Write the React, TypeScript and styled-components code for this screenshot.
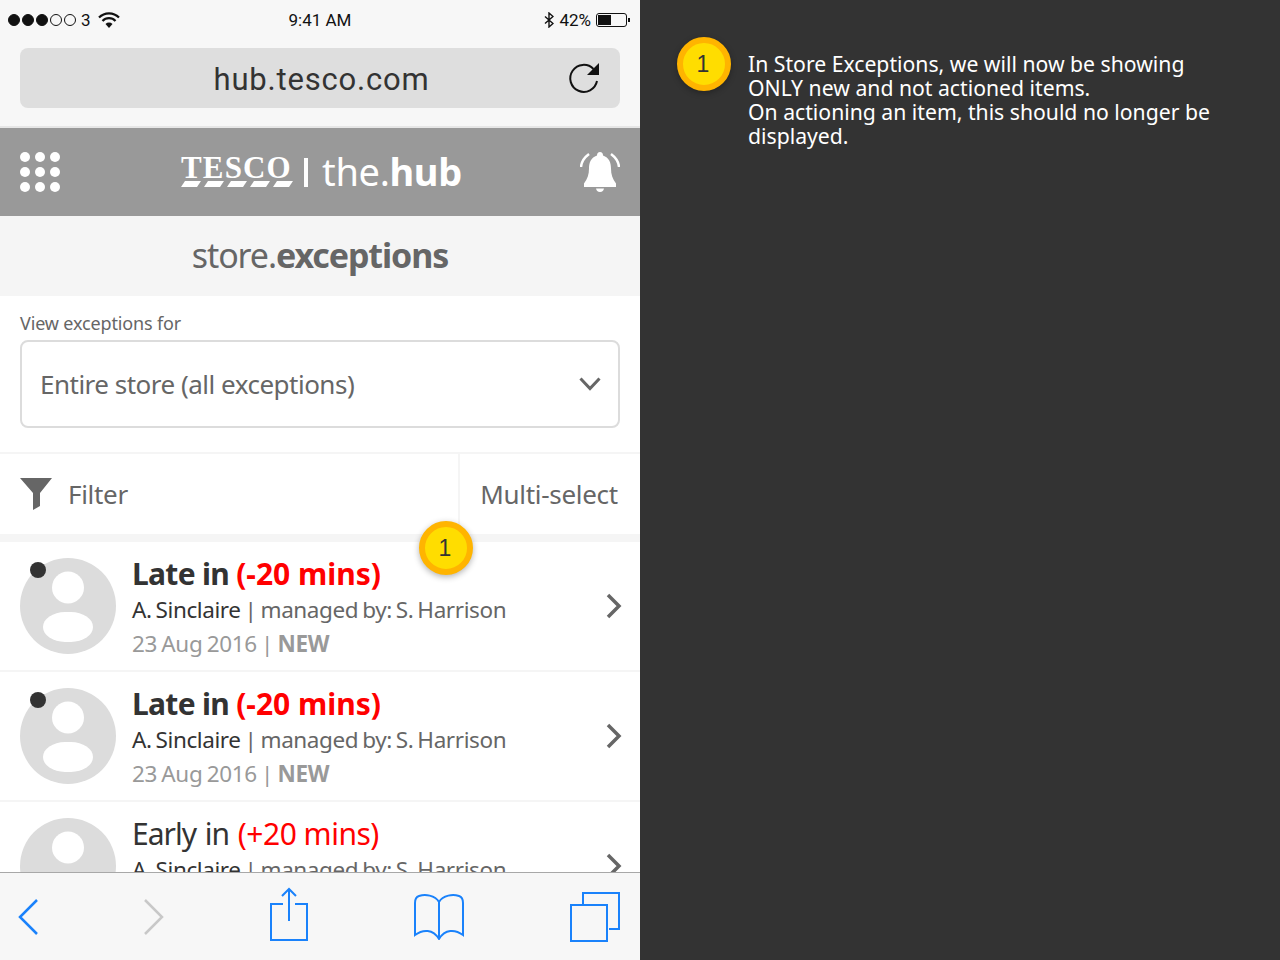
// Tesco hub - store exceptions annotated screen

import styled, { createGlobalStyle } from "styled-components";

const GlobalStyle = createGlobalStyle`
  html, body {
    margin: 0;
    padding: 0;
    background: #333333;
  }
  * {
    box-sizing: border-box;
  }
`;

const Page = styled.div`
  display: flex;
  width: 1280px;
  height: 960px;
  overflow: hidden;
  font-family: "Noto Sans", "Open Sans", sans-serif;
`;

// 왼쪽 phone 화면
const Phone = styled.div`
  position: relative;
  display: flex;
  flex-direction: column;
  width: 640px;
  height: 960px;
  background: #ffffff;
`;

const StatusBar = styled.div`
  display: grid;
  grid-template-columns: 1fr auto 1fr;
  align-items: center;
  height: 40px;
  padding: 0 8px;
  background: #f7f7f7;
  color: #111111;
  font-family: Roboto, sans-serif;
  font-size: 17px;
`;

const StatusLeft = styled.div`
  display: flex;
  align-items: center;
  gap: 5px;
`;

const StatusRight = styled.div`
  display: flex;
  align-items: center;
  justify-content: flex-end;
  gap: 5px;
`;

const Signal = styled.div`
  display: flex;
  gap: 2px;
`;

const Dot = styled.span<{ $on: boolean }>`
  width: 12px;
  height: 12px;
  border-radius: 50%;
  border: 1px solid #111111;
  background: ${(p) => (p.$on ? "#111111" : "transparent")};
`;

const WifiIcon = styled.svg`
  margin-left: 2px;
`;

const AddressArea = styled.div`
  height: 88px;
  padding: 8px 20px 0;
  background: #f7f7f7;
  border-bottom: 2px solid #e6e6e6;
`;

const AddressBar = styled.div`
  position: relative;
  display: flex;
  align-items: center;
  justify-content: center;
  height: 60px;
  padding: 3px 0 0 3px;
  border-radius: 8px;
  background: #dedede;
  color: #333333;
  font-family: Roboto, sans-serif;
  font-size: 31px;
  letter-spacing: 0.8px;
`;

const Reload = styled.svg`
  position: absolute;
  right: 17px;
  top: 12px;
`;

const Header = styled.div`
  display: flex;
  align-items: center;
  justify-content: space-between;
  height: 88px;
  padding: 0 20px;
  background: #999999;
`;

const Apps = styled.div`
  display: grid;
  grid-template-columns: repeat(3, 10px);
  gap: 5px;
`;

const AppDot = styled.span`
  width: 10px;
  height: 10px;
  border-radius: 50%;
  background: #ffffff;
`;

const Logo = styled.div`
  display: flex;
  align-items: center;
  margin-left: 3px;
  color: #ffffff;
`;

const TescoMark = styled.div`
  display: flex;
  flex-direction: column;
  gap: 4px;
  width: 112px;
`;

const TescoWord = styled.span`
  height: 20px;
  font-family: "Liberation Serif", serif;
  font-size: 31px;
  font-weight: bold;
  line-height: 22px;
  letter-spacing: 1.1px;
  white-space: nowrap;
`;

const LogoBar = styled.span`
  width: 4px;
  height: 29px;
  margin: 0 14px 0 11px;
  background: #ffffff;
`;

const HubName = styled.span`
  margin-bottom: 2px;
  font-size: 38px;
  line-height: 44px;
  letter-spacing: -0.35px;
  b {
    font-weight: 700;
  }
`;

const TitleBar = styled.div`
  display: flex;
  align-items: center;
  justify-content: center;
  height: 80px;
  padding-bottom: 2px;
  background: #f5f5f5;
  color: #666666;
  font-size: 34px;
  letter-spacing: -1.1px;
  b {
    font-weight: 700;
  }
`;

const SelectArea = styled.div`
  height: 158px;
  padding: 15px 20px 0;
  border-bottom: 2px solid #f5f5f5;
`;

const FieldLabel = styled.div`
  height: 29px;
  color: #666666;
  font-size: 18px;
  line-height: 24px;
  letter-spacing: -0.15px;
`;

const Select = styled.div`
  display: flex;
  align-items: center;
  justify-content: space-between;
  height: 88px;
  padding: 0 17px 0 18px;
  border: 2px solid #dcdcdc;
  border-radius: 8px;
  color: #666666;
  font-size: 26px;
  letter-spacing: -0.5px;
`;

const FilterBar = styled.div`
  display: flex;
  height: 88px;
  border-bottom: 8px solid #f5f5f5;
  color: #666666;
  font-size: 26px;
  letter-spacing: -0.3px;
`;

const FilterCell = styled.div`
  display: flex;
  flex: 1;
  align-items: center;
  gap: 16px;
  padding-left: 20px;
`;

const MultiCell = styled.div`
  display: flex;
  align-items: center;
  justify-content: center;
  width: 182px;
  padding-right: 2px;
  border-left: 2px solid #f5f5f5;
`;

const List = styled.div`
  flex: 1;
  min-height: 0;
  overflow: hidden;
`;

const Row = styled.div`
  position: relative;
  display: flex;
  align-items: center;
  height: 130px;
  padding: 0 18px 0 20px;
  border-bottom: 2px solid #f5f5f5;
`;

const AvatarIcon = styled.svg`
  flex: none;
`;

const Unread = styled.span`
  position: absolute;
  left: 30px;
  top: 20px;
  width: 16px;
  height: 16px;
  border-radius: 50%;
  background: #333333;
`;

const RowText = styled.div`
  flex: 1;
  align-self: flex-start;
  margin-left: 16px;
  padding-top: 14px;
`;

const RowTitle = styled.div<{ $bold: boolean }>`
  height: 35px;
  color: #333333;
  font-size: 30px;
  font-weight: ${(p) => (p.$bold ? 700 : 400)};
  line-height: 36px;
  letter-spacing: ${(p) => (p.$bold ? "-0.7px" : "-1px")};
  word-spacing: ${(p) => (p.$bold ? "0" : "2px")};
  span {
    color: #ff0000;
    letter-spacing: ${(p) => (p.$bold ? "0" : "-0.5px")};
    word-spacing: 0;
  }
`;

const RowLine = styled.div`
  height: 35px;
  color: #666666;
  font-size: 22.5px;
  line-height: 38px;
  letter-spacing: -0.4px;
  word-spacing: -1.5px;
  em {
    color: #333333;
    font-style: normal;
  }
`;

const RowDate = styled.div`
  height: 34px;
  color: #999999;
  font-size: 22.5px;
  line-height: 36px;
  letter-spacing: -0.35px;
  word-spacing: -1.2px;
  b {
    font-weight: 700;
  }
`;

const BottomBar = styled.div`
  position: relative;
  display: flex;
  align-items: center;
  justify-content: space-between;
  height: 88px;
  padding: 0 20px 0 18px;
  border-top: 1px solid #a8a8a8;
  background: #f7f7f7;
`;

const ShareIcon = styled.svg`
  margin-bottom: 5px;
`;

const Badge = styled.div<{ $overlay?: boolean }>`
  position: ${(p) => (p.$overlay ? "absolute" : "static")};
  left: 419px;
  top: 521px;
  display: flex;
  flex: none;
  align-items: center;
  justify-content: center;
  width: 54px;
  height: 54px;
  padding-right: 2px;
  border: 6px solid #ffb400;
  border-radius: 50%;
  background: #ffdd00;
  color: #333333;
  font-family: "Liberation Sans", sans-serif;
  font-size: 23px;
  box-shadow: 0 2px 6px rgba(0, 0, 0, 0.3);
`;

// 오른쪽 설명 panel
const Notes = styled.div`
  display: flex;
  flex: 1;
  gap: 17px;
  padding: 37px 30px 0 37px;
  background: #333333;
`;

const NoteText = styled.div`
  padding-top: 15px;
  color: #ffffff;
  font-size: 21.2px;
  line-height: 24px;
  white-space: nowrap;
`;

const rows = [
  { bold: true, label: "Late in", delta: "(-20 mins)", unread: true },
  { bold: true, label: "Late in", delta: "(-20 mins)", unread: true },
  { bold: false, label: "Early in", delta: "(+20 mins)", unread: false },
];

const Avatar = () => (
  <AvatarIcon width="96" height="96" viewBox="0 0 96 96">
    <circle cx="48" cy="48" r="48" fill="#dcdcdc" />
    <ellipse cx="48" cy="29.500" rx="16" ry="16" fill="#fff" />
    <rect x="23" y="54" width="50" height="30" rx="22" ry="15" fill="#fff" />
  </AvatarIcon>
);

export default () => {
  return (
    <Page>
      <GlobalStyle />
      <Phone>
        <StatusBar>
          <StatusLeft>
            <Signal>
              {[true, true, true, false, false].map((on, i) => (
                <Dot key={i} $on={on} />
              ))}
            </Signal>
            3
            <WifiIcon width="22" height="16" viewBox="0 0 22 16">
              <path d="M1 5.500a14 14 0 0 1 20 0" fill="none" stroke="#111" strokeWidth="2.200" />
              <path d="M4.500 9a9 9 0 0 1 13 0" fill="none" stroke="#111" strokeWidth="2.200" />
              <path d="M7.500 12a5 5 0 0 1 7 0L11 16z" fill="#111" />
            </WifiIcon>
          </StatusLeft>
          <span>9:41 AM</span>
          <StatusRight>
            <svg width="10" height="16" viewBox="0 0 10 16">
              <path d="M1 4.500l8 7-4 3.500V1l4 3.500-8 7" fill="none" stroke="#111" strokeWidth="1.400" />
            </svg>
            42%
            <svg width="36" height="16" viewBox="0 0 36 16">
              <rect x="0.5" y="1.500" width="30" height="13" rx="2.500" fill="none" stroke="#111" />
              <rect x="2" y="3" width="13" height="10" fill="#111" />
              <rect x="32" y="6" width="2" height="4" fill="#111" />
            </svg>
          </StatusRight>
        </StatusBar>

        <AddressArea>
          <AddressBar>
            hub.tesco.com
            <Reload width="36" height="36" viewBox="0 0 36 36">
              <path d="M30 21a13.500 13.500 0 1 1-3.500-12" fill="none" stroke="#111" strokeWidth="2" />
              <path d="M32 3v12H20z" fill="#111" />
            </Reload>
          </AddressBar>
        </AddressArea>

        <Header>
          <Apps>
            {Array.from({ length: 9 }).map((_, i) => (
              <AppDot key={i} />
            ))}
          </Apps>
          <Logo>
            <TescoMark>
              <TescoWord>TESCO</TescoWord>
              <svg width="112" height="6" viewBox="0 0 112 6">
                {[0, 23, 46, 69, 92].map((x) => (
                  <path key={x} d={`M${x + 4} 0h16l-4 6H${x}z`} fill="#fff" />
                ))}
              </svg>
            </TescoMark>
            <LogoBar />
            <HubName>
              the.<b>hub</b>
            </HubName>
          </Logo>
          <svg width="40" height="40" viewBox="0 0 40 40">
            <path
              d="M20 0c2 0 3 1.500 3 3.500 6 2 8 7 8 13 0 6 1.500 10 5 15v3.500H4V31.500c3.500-5 5-9 5-15 0-6 2-11 8-13C17 1.500 18 0 20 0z"
              fill="#fff"
            />
            <path d="M16 36.500h8c-.5 2-1.500 3.500-4 3.500s-3.500-1.500-4-3.500z" fill="#fff" />
            <path d="M9 2C5 5 1.500 9 1 15M31 2c4 3 7.500 7 8 13" fill="none" stroke="#fff" strokeWidth="2.500" />
          </svg>
        </Header>

        <TitleBar>
          <span>
            store.<b>exceptions</b>
          </span>
        </TitleBar>

        <SelectArea>
          <FieldLabel>View exceptions for</FieldLabel>
          <Select>
            Entire store (all exceptions)
            <svg width="22" height="14" viewBox="0 0 22 14">
              <path d="M1.500 1.500l9.500 10 9.500-10" fill="none" stroke="#666666" strokeWidth="3" />
            </svg>
          </Select>
        </SelectArea>

        <FilterBar>
          <FilterCell>
            <svg width="32" height="32" viewBox="0 0 32 32">
              <path d="M0 0h32L20 15v13l-7 4V15z" fill="#666666" />
            </svg>
            Filter
          </FilterCell>
          <MultiCell>Multi-select</MultiCell>
        </FilterBar>

        <List>
          {rows.map((row, i) => (
            <Row key={i}>
              <Avatar />
              {row.unread && <Unread />}
              <RowText>
                <RowTitle $bold={row.bold}>
                  {row.label} <span>{row.delta}</span>
                </RowTitle>
                <RowLine>
                  <em>A. Sinclaire</em> | managed by: S. Harrison
                </RowLine>
                <RowDate>
                  23 Aug 2016 | <b>NEW</b>
                </RowDate>
              </RowText>
              <svg width="16" height="26" viewBox="0 0 16 26">
                <path d="M2 2l11 11L2 24" fill="none" stroke="#666666" strokeWidth="3.500" />
              </svg>
            </Row>
          ))}
        </List>

        <BottomBar>
          <svg width="20" height="36" viewBox="0 0 20 36">
            <path d="M19 1L2 18l17 17" fill="none" stroke="#1a82fb" strokeWidth="2.500" />
          </svg>
          <svg width="20" height="36" viewBox="0 0 20 36">
            <path d="M1 1l17 17L1 35" fill="none" stroke="#c8c8c8" strokeWidth="2.500" />
          </svg>
          <ShareIcon width="38" height="54" viewBox="0 0 38 54">
            <path d="M13 17H1v36h36V17H25M19 34V2M12 9l7-7 7 7" fill="none" stroke="#1a82fb" strokeWidth="2" />
          </ShareIcon>
          <svg width="50" height="46" viewBox="0 0 50 46">
            <path
              d="M25 8C21 1 11 0 5 2 2 3 1 6 1 9v32c8-6 18-6 24 4 6-10 16-10 24-4V9c0-3-1-6-4-7-6-2-16-1-20 6zM25 8v37"
              fill="none"
              stroke="#1a82fb"
              strokeWidth="2"
            />
          </svg>
          <svg width="50" height="50" viewBox="0 0 50 50">
            <path d="M13 12V1h36v36H39" fill="none" stroke="#1a82fb" strokeWidth="2" />
            <rect x="1" y="13" width="36" height="36" fill="none" stroke="#1a82fb" strokeWidth="2" />
          </svg>
        </BottomBar>

        <Badge $overlay>1</Badge>
      </Phone>

      <Notes>
        <Badge>1</Badge>
        <NoteText>
          In Store Exceptions, we will now be showing
          <br />
          ONLY new and not actioned items.
          <br />
          On actioning an item, this should no longer be
          <br />
          displayed.
        </NoteText>
      </Notes>
    </Page>
  );
};
